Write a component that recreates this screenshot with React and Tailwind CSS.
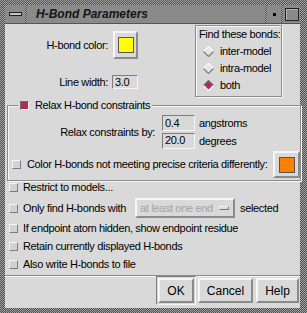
const raised = 'border-2 border-t-[#f6f6f6] border-l-[#f6f6f6] border-r-[#8b8b8b] border-b-[#8b8b8b]';
const sunken = 'border border-t-[#7d7d7d] border-l-[#7d7d7d] border-r-[#f6f6f6] border-b-[#f6f6f6]';

const Check = ({ on }) => (
    <div className={on
        ? 'w-[9px] h-[9px] shrink-0 border border-t-[#6e6e6e] border-l-[#6e6e6e] border-r-[#f6f6f6] border-b-[#f6f6f6] bg-[#b02a5a]'
        : 'w-[9px] h-[9px] shrink-0 border border-t-[#f6f6f6] border-l-[#f6f6f6] border-r-[#7d7d7d] border-b-[#7d7d7d] bg-[#d2d2d2]'} />
);

const Diamond = ({ on }) => (
    <svg width="11" height="11" viewBox="0 0 11 11" className="shrink-0">
        <polygon points="5.5,0.5 10.5,5.5 5.5,10.5 0.5,5.5" fill={on ? '#b02a5a' : '#e4e4e4'} />
        <path d="M0.5 5.5 L5.5 0.5 L10.5 5.5" fill="none" stroke={on ? '#6e6e6e' : '#fafafa'} strokeWidth="1.2" />
        <path d="M0.5 5.5 L5.5 10.5 L10.5 5.5" fill="none" stroke={on ? '#fafafa' : '#7d7d7d'} strokeWidth="1.2" />
    </svg>
);

const ColorButton = ({ color, className }) => (
    <div className={`${raised} flex items-center justify-center shrink-0 ${className}`}>
        <div className={`w-[16px] h-[16px] border border-[#555] ${color}`} />
    </div>
);

const Field = ({ value, className }) => (
    <div className={`${sunken} h-[16px] pl-[2px] flex items-center leading-none ${className}`}>{value}</div>
);

const Sep = () => (
    <div className="w-[2px] self-stretch bg-[image:repeating-conic-gradient(#4e4e4e_0_25%,#a6a6a6_0_50%)] bg-[length:2px_2px]" />
);

const PushButton = ({ label, className }) => (
    <div className={`${raised} h-[25px] flex items-center justify-center ${className}`}>{label}</div>
);

export default function App() {
    return (
        <div className="w-[307px] h-[313px] pt-[5px] pl-[5px] pr-[7px] pb-[5px] flex flex-col whitespace-nowrap bg-[image:repeating-conic-gradient(#4e4e4e_0_25%,#a6a6a6_0_50%)] bg-[length:2px_2px] font-['Liberation_Sans',Arial,sans-serif] text-[11px] tracking-[-0.35px] text-black">
            {/* title bar */}
            <div className="h-[18px] flex bg-[#8a8a8a]">
                <div className="w-[20px] flex items-center justify-center">
                    <div className="w-[13px] h-[4px] border border-[#222] bg-[#c4c4c4]" />
                </div>
                <Sep />
                <div className="flex-1 pl-[9px] flex items-center text-[12px] font-bold italic tracking-normal text-[#151515]">H-Bond Parameters</div>
                <Sep />
                <div className="w-[14px] flex items-center justify-center">
                    <div className="w-[3px] h-[3px] bg-black" />
                </div>
                <Sep />
                <div className="w-[17px] flex items-center justify-center">
                    <div className="w-[14px] h-[13px] border border-[#222] shadow-[inset_1px_1px_0_#b5b5b5]" />
                </div>
            </div>
            <div className="h-px bg-[#555]" />

            <div className="flex-1 bg-[#d9d9d9] flex flex-col">
                {/* top section */}
                <div className="flex h-[73px]">
                    <div className="w-[134px] pr-[1px] pt-[7px] flex flex-col">
                        <div className="h-[28px] flex items-center justify-end gap-[5px]">
                            <span>H-bond color:</span>
                            <ColorButton color="bg-[#ffff00]" className="w-[25px] h-[28px]" />
                        </div>
                        <div className="mt-[15px] flex items-center justify-end gap-[4px]">
                            <span>Line width:</span>
                            <Field value="3.0" className="w-[26px] !h-[14px]" />
                        </div>
                    </div>
                    <div className="ml-[56px] mt-[1px] w-[87px] h-[72px] border border-[#8b8b8b] shadow-[inset_1px_1px_0_#f6f6f6,1px_1px_0_#f6f6f6] pl-[3px] pt-[2px] flex flex-col">
                        <div className="h-[13px] flex items-center">Find these bonds:</div>
                        <div className="mt-[2px] flex flex-col pl-[4px]">
                            <div className="h-[17px] flex items-center gap-[6px]"><Diamond />inter-model</div>
                            <div className="h-[17px] flex items-center gap-[6px]"><Diamond />intra-model</div>
                            <div className="h-[17px] flex items-center gap-[6px]"><Diamond on />both</div>
                        </div>
                    </div>
                </div>

                {/* relax group */}
                <fieldset className="ml-[2px] mr-[1px] mt-[3px] border border-[#8b8b8b] shadow-[inset_1px_1px_0_#f6f6f6,1px_1px_0_#f6f6f6] pb-[2px]">
                    <legend className="ml-[10px] px-[2px] bg-[#d9d9d9] h-[11px] flex items-center gap-[6px]">
                        <Check on />
                        <span>Relax H-bond constraints</span>
                    </legend>
                    <div className="pt-[4px] flex items-center">
                        <div className="w-[147px] text-right">Relax constraints by:</div>
                        <div className="ml-[7px] grid grid-cols-[33px_auto] gap-y-[1px] gap-x-[4px] items-center">
                            <Field value="0.4" />
                            <span>angstroms</span>
                            <Field value="20.0" />
                            <span>degrees</span>
                        </div>
                    </div>
                    <div className="mt-[2px] pl-[4px] flex items-center gap-[6px]">
                        <Check />
                        <span>Color H-bonds not meeting precise criteria differently:</span>
                        <ColorButton color="bg-[#ff8000]" className="ml-auto w-[27px] h-[27px]" />
                    </div>
                </fieldset>

                {/* toggles */}
                <div className="pl-[4px] flex flex-col">
                    <div className="h-[12px] flex items-center gap-[5px]"><Check /><span>Restrict to models...</span></div>
                    <div className="mt-[5px] h-[20px] flex items-center">
                        <Check />
                        <span className="ml-[5px] w-[112px]">Only find H-bonds with</span>
                        <div className={`${raised} w-[100px] h-[20px] pl-[3px] pr-[4px] flex items-center justify-between text-[#a2a2a2]`}>
                            <span>at least one end</span>
                            <div className="w-[10px] h-[4px] border border-t-[#f6f6f6] border-l-[#f6f6f6] border-r-[#7d7d7d] border-b-[#7d7d7d]" />
                        </div>
                        <span className="ml-[5px]">selected</span>
                    </div>
                    <div className="mt-[4px] h-[12px] flex items-center gap-[5px]"><Check /><span>If endpoint atom hidden, show endpoint residue</span></div>
                    <div className="mt-[6px] h-[12px] flex items-center gap-[5px]"><Check /><span>Retain currently displayed H-bonds</span></div>
                    <div className="mt-[6px] h-[12px] flex items-center gap-[5px]"><Check /><span>Also write H-bonds to file</span></div>
                </div>

                <div className="mt-[5px] h-px bg-[#8b8b8b]" />
                <div className="h-px bg-[#f6f6f6]" />

                {/* buttons */}
                <div className="flex-1 flex items-start justify-end pr-[1px] pt-[1px] text-[12px] tracking-normal">
                    <div className="-mt-[2px] p-px border border-t-[#7d7d7d] border-l-[#7d7d7d] border-r-[#f6f6f6] border-b-[#f6f6f6]">
                        <PushButton label="OK" className="w-[36px]" />
                    </div>
                    <PushButton label="Cancel" className="ml-[2px] w-[55px]" />
                    <PushButton label="Help" className="ml-[3px] w-[43px]" />
                </div>
            </div>
        </div>
    );
}
